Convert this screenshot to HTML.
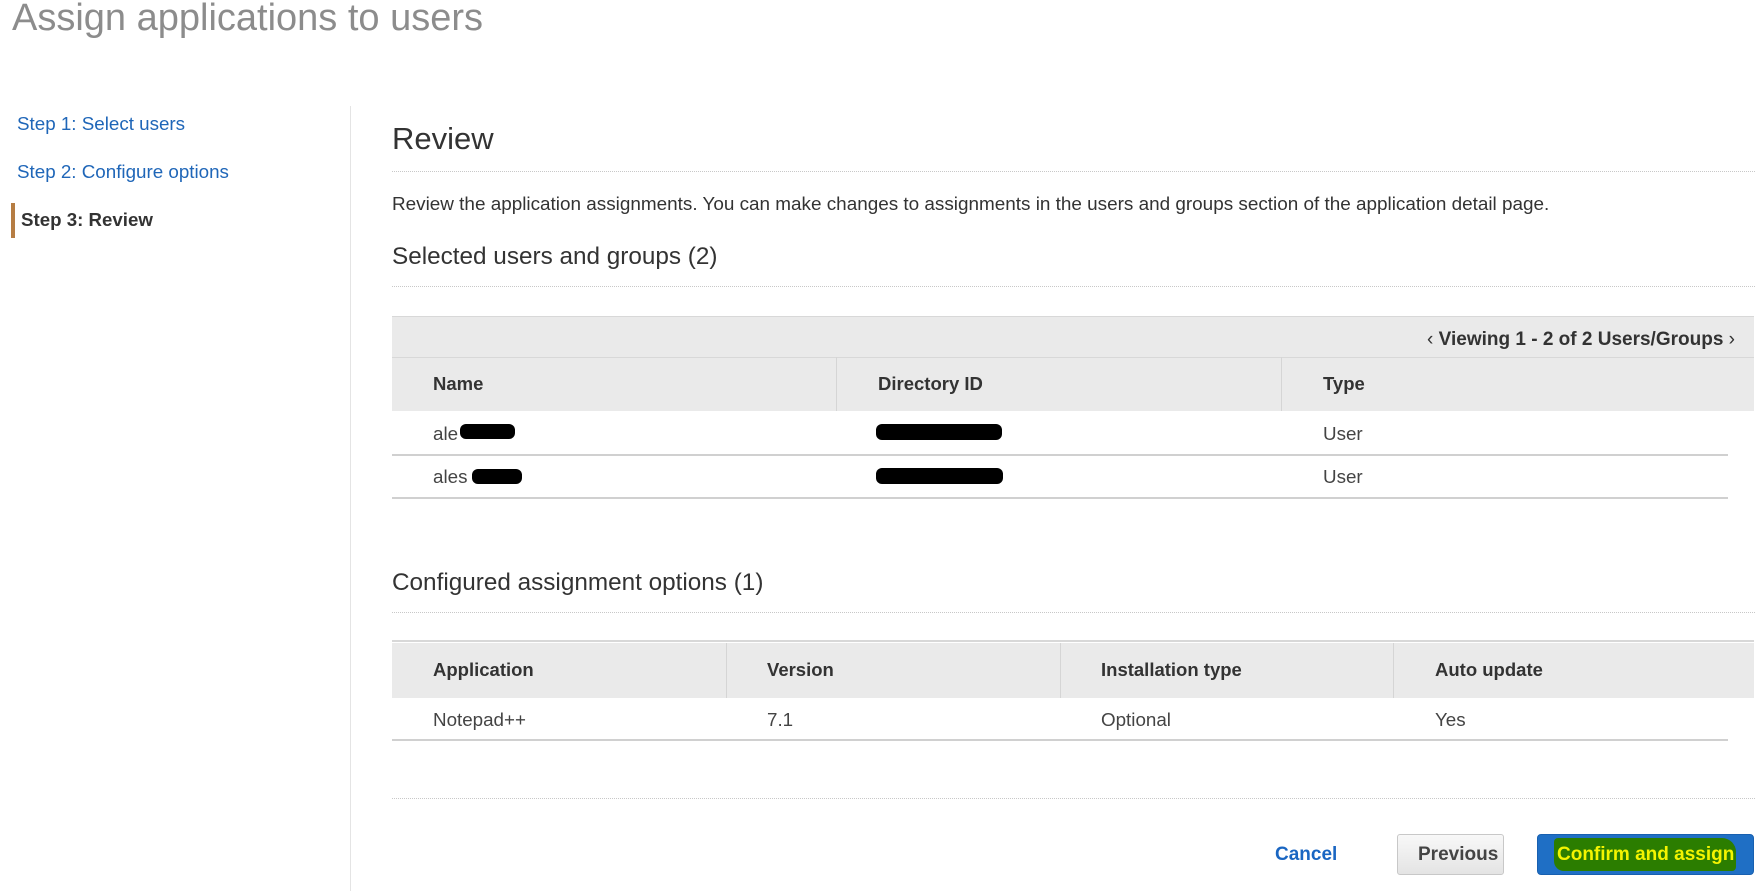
<!DOCTYPE html>
<html><head><meta charset="utf-8"><style>
*{margin:0;padding:0;box-sizing:border-box}
body{width:1759px;height:891px;background:#fff;font-family:"Liberation Sans",Arial,sans-serif;color:#333;position:relative;overflow:hidden}
.a{position:absolute;white-space:nowrap}
.dot{position:absolute;left:392px;width:1363px;border-top:1px dotted #c8c8c8;height:0}
.gray{position:absolute;background:#eaeaea}
.vl{position:absolute;width:1px;background:#d5d5d5}
.hl{position:absolute;height:1px;background:#d0d0d0}
.th{font-weight:bold;font-size:18.5px;color:#333}
.td{font-size:18.8px;color:#444}
.blk{position:absolute;background:#000;border-radius:6px}
</style></head><body>
<div class="a" style="left:12px;top:-3px;font-size:38px;color:#8c8c8c">Assign applications to users</div>

<div class="a" style="left:17px;top:113px;font-size:18.8px;color:#1f66b8">Step 1: Select users</div>
<div class="a" style="left:17px;top:161px;font-size:18.8px;color:#1f66b8">Step 2: Configure options</div>
<div style="position:absolute;left:11px;top:203px;width:4px;height:35px;background:#b67d43"></div>
<div class="a" style="left:21px;top:209px;font-size:18.7px;font-weight:bold;color:#333">Step 3: Review</div>
<div class="vl" style="left:350px;top:106px;height:785px;background:#e4e4e4"></div>

<div class="a" style="left:392px;top:121px;font-size:31px;color:#333">Review</div>
<div class="dot" style="top:171px"></div>
<div class="a" style="left:392px;top:194px;font-size:18.9px;color:#333">Review the application assignments. You can make changes to assignments in the users and groups section of the application detail page.</div>
<div class="a" style="left:392px;top:243px;font-size:24.3px;color:#333">Selected users and groups (2)</div>
<div class="dot" style="top:286px"></div>

<div class="gray" style="left:392px;top:316px;width:1362px;height:95px"></div>
<div class="hl" style="left:392px;top:316px;width:1362px;background:#d8d8d8"></div>
<div class="hl" style="left:392px;top:357px;width:1362px;background:#d8d8d8"></div>
<div class="a th" style="right:24px;top:329px;font-size:19px"><span style="font-weight:normal">‹</span> Viewing 1 - 2 of 2 Users/Groups <span style="font-weight:normal">›</span></div>
<div class="vl" style="left:836px;top:357px;height:54px"></div>
<div class="vl" style="left:1281px;top:357px;height:54px"></div>
<div class="a th" style="left:433px;top:373px">Name</div>
<div class="a th" style="left:878px;top:373px">Directory ID</div>
<div class="a th" style="left:1323px;top:373px">Type</div>

<div class="a td" style="left:433px;top:423px">ale</div>
<div class="blk" style="left:460px;top:424px;width:55px;height:15px"></div>
<div class="blk" style="left:876px;top:424px;width:126px;height:16px"></div>
<div class="a td" style="left:1323px;top:423px">User</div>
<div class="hl" style="left:392px;top:454px;width:1336px;height:2px"></div>
<div class="a td" style="left:433px;top:466px">ales</div>
<div class="blk" style="left:472px;top:469px;width:50px;height:15px"></div>
<div class="blk" style="left:876px;top:468px;width:127px;height:16px"></div>
<div class="a td" style="left:1323px;top:466px">User</div>
<div class="hl" style="left:392px;top:497px;width:1336px;height:2px"></div>

<div class="a" style="left:392px;top:569px;font-size:24.3px;color:#333">Configured assignment options (1)</div>
<div class="dot" style="top:612px"></div>

<div class="hl" style="left:392px;top:640px;width:1362px;height:2px;background:#d8d8d8"></div>
<div class="gray" style="left:392px;top:643px;width:1362px;height:55px"></div>
<div class="vl" style="left:726px;top:643px;height:55px"></div>
<div class="vl" style="left:1060px;top:643px;height:55px"></div>
<div class="vl" style="left:1393px;top:643px;height:55px"></div>
<div class="a th" style="left:433px;top:659px">Application</div>
<div class="a th" style="left:767px;top:659px">Version</div>
<div class="a th" style="left:1101px;top:659px">Installation type</div>
<div class="a th" style="left:1435px;top:659px">Auto update</div>
<div class="a td" style="left:433px;top:709px">Notepad++</div>
<div class="a td" style="left:767px;top:709px">7.1</div>
<div class="a td" style="left:1101px;top:709px">Optional</div>
<div class="a td" style="left:1435px;top:709px">Yes</div>
<div class="hl" style="left:392px;top:739px;width:1336px;height:2px"></div>

<div class="dot" style="top:798px"></div>

<div class="a" style="left:1275px;top:844px;font-size:19px;font-weight:bold;color:#1a66c2">Cancel</div>
<div style="position:absolute;left:1397px;top:834px;width:107px;height:41px;border:1px solid #c8c8c8;border-radius:3px;background:linear-gradient(#f8f8f8,#e4e4e4)"></div>
<div class="a" style="left:1418px;top:844px;font-size:19px;font-weight:bold;color:#444">Previous</div>
<div style="position:absolute;left:1537px;top:834px;width:217px;height:41px;border-radius:4px;background:#1f6fc5;border:1px solid #1860b0"></div>
<div style="position:absolute;left:1554px;top:838px;width:182px;height:33px;background:#2b7d00;border-radius:4px 14px 4px 10px"></div>
<div class="a" style="left:1557px;top:844px;font-size:19px;font-weight:bold;color:#f4f400">Confirm and assign</div>
</body></html>
